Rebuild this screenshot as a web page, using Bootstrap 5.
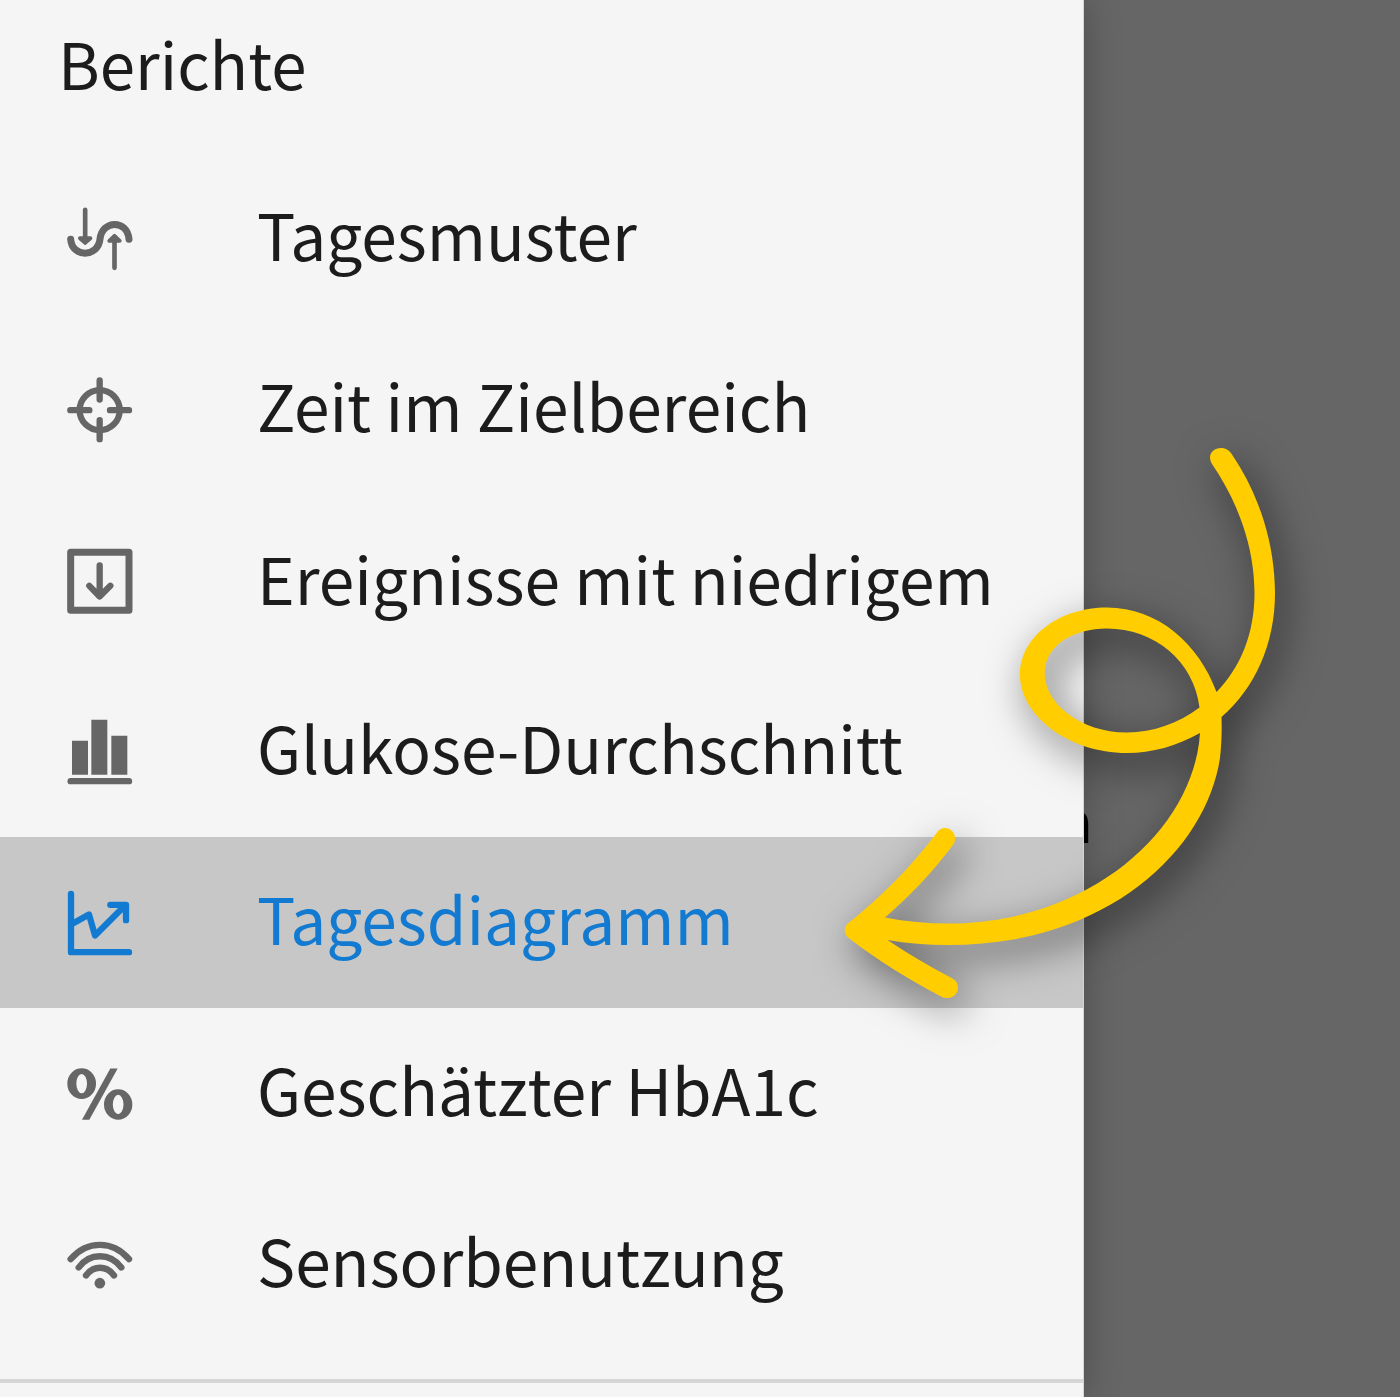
<!DOCTYPE html>
<html lang="de">
<head>
<meta charset="utf-8">
<meta name="viewport" content="width=device-width, initial-scale=1">
<title>Berichte</title>
<link rel="stylesheet" href="https://cdn.jsdelivr.net/npm/bootstrap@5.3.0/dist/css/bootstrap.min.css">
<style>
body{font-family:"Noto Sans CJK SC","Noto Sans CJK JP","Noto Sans",sans-serif;background:#666;color:#1c1c1c}
.app-shell{height:1397px;width:1400px}
.drawer{width:1084px;background:#f5f5f5;z-index:2;border-right:1px solid #d5d5d5;box-shadow:0 0 34px rgba(0,0,0,.26)}
.drawer-title{font-size:63.6px;line-height:125px;height:153px;padding-left:58px;font-weight:400}
.report-item{height:171px;padding:0 0 0 50px;font-size:64px;line-height:92px;color:#1c1c1c;text-decoration:none;white-space:nowrap}
.report-item span{padding-bottom:12px}
.report-item.low-events span{padding-bottom:7px}
.report-item.selected{background:#c7c7c7;color:#127bd1}
.report-icon{width:100px;height:100px;margin-right:107px;fill:none;stroke:#666;stroke-width:19;stroke-linecap:round;stroke-linejoin:round}
.selected .report-icon{stroke:#127bd1}
.report-icon .solid{fill:#666;stroke:none}
.drawer-rule{height:4px;background:#d6d6d6;margin-top:29px}
.covered-text{right:307px;top:777px;font-size:56px;line-height:84px;color:#000}
.pointer-arrow{z-index:3;filter:drop-shadow(8px 13px 20px rgba(0,0,0,.52))}
</style>
</head>
<body>
<div class="app-shell position-relative overflow-hidden d-flex">
  <span class="covered-text position-absolute">n</span>
  <aside class="drawer position-relative h-100 d-flex flex-column">
    <h1 class="drawer-title m-0">Berichte</h1>
    <nav class="d-flex flex-column">
      <a class="report-item d-flex align-items-center" href="#">
        <svg class="report-icon" viewBox="0 -4.5 300 300"><path d="M62 146C66 202 144 202 150 146C156 88 232 86 237 146" stroke-width="21"/><path d="M105.500 58V145M193.500 232V150" stroke-width="14"/><path d="M90 143H121L105.500 157ZM178 151H209L193.500 136Z" fill="#666" stroke-width="12"/></svg>
        <span>Tagesmuster</span></a>
      <a class="report-item d-flex align-items-center" href="#">
        <svg class="report-icon" viewBox="0 -1.5 300 300"><circle cx="149" cy="149" r="60"/><path d="M149 60V117M149 179V236M61 149H118M180 149H237"/></svg>
        <span>Zeit im Zielbereich</span></a>
      <a class="report-item low-events d-flex align-items-center" href="#">
        <svg class="report-icon" viewBox="0 1.500 300 300"><path d="M62 65H237V239H62Z" stroke-width="21"/><path d="M149 105V196M118 166L149 198L181 166"/></svg>
        <span>Ereignisse mit niedrigem</span></a>
      <a class="report-item d-flex align-items-center" href="#">
        <svg class="report-icon" viewBox="0 4.500 300 300"><path class="solid" d="M66 121H114V223H66ZM124 58H172V223H124ZM184 106H232V223H184Z"/><path d="M62 242H237"/></svg>
        <span>Glukose-Durchschnitt</span></a>
      <a class="report-item selected d-flex align-items-center" href="#" aria-current="page">
        <svg class="report-icon" viewBox="0 7.500 300 300"><path d="M63 70V245H237M63 162L117 132L135 195L225 105M181 103H228V149"/></svg>
        <span>Tagesdiagramm</span></a>
      <a class="report-item d-flex align-items-center" href="#">
        <svg class="report-icon" viewBox="0 -19.500 300 300"><path class="solid" fill-rule="evenodd" d="M52 99.500a43 46 0 1 0 86 0a43 46 0 1 0 -86 0ZM79 99.500a16 29 0 1 0 32 0a16 29 0 1 0 -32 0ZM162 162a42.500 46 0 1 0 85 0a42.500 46 0 1 0 -85 0ZM188.500 162a16 29 0 1 0 32 0a16 29 0 1 0 -32 0Z"/><path class="solid" d="M181 54H203L118 208H96Z"/></svg>
        <span>Geschätzter HbA1c</span></a>
      <a class="report-item d-flex align-items-center" href="#">
        <svg class="report-icon" viewBox="0 -16.500 300 300"><path d="M62 116C111 59 188 59 237 116M86 141C119 96 180 96 214 141M108 165C131 134 169 134 192 165"/><circle class="solid" cx="149.500" cy="188" r="16"/></svg>
        <span>Sensorbenutzung</span></a>
    </nav>
    <div class="drawer-rule"></div>
  </aside>
  <svg class="pointer-arrow position-absolute top-0 start-0" width="1400" height="1397" viewBox="0 0 1400 1397" aria-hidden="true">
    <path fill="#ffcd00" fill-rule="evenodd" d="M1210 457.500C1210 452 1215 448 1221 448C1226 448 1229.500 450.500 1232 454.500C1260 496 1275 545 1275 593C1275 644 1255 688 1221.500 717C1222 731 1221.500 745 1220 758C1206 850 1108 945 948 945C927 945 907 943.500 887.500 940C908 954 930 966.500 952.500 978.500C956 980.500 958 983.500 958 987.500C958 993.500 953.500 998 947.500 998C945 998 943 997.500 941 996.500C910 980.500 879 961 850 939C846.500 936.500 844.700 934 844.700 930.500C844.700 927.500 846 925 848.500 923C881 897 911 867 937 832.500C939 829.500 941.500 828 945 828C950.500 828 955 832.500 955 838.500C955 841 954.500 843 953 845C933 871.500 910 896 885 917.500C906 921.500 927 923.500 948 923.500C1089 923.500 1194 830 1200 733C1177 746 1152 753 1127 753C1068 753 1020 715 1020 675C1020 636 1060 607.500 1107 607.500C1158 607.500 1199 644 1216.500 692C1241 667 1254.500 633 1254.500 593C1254.500 547 1238 502 1212 464Q1210 461 1210 457.500ZM1199.500 707.500C1194 661 1154 628.500 1107 628.500C1074 628.500 1044.700 645 1044.700 673.500C1044.700 703 1080 732.500 1127 732.500C1153 732.500 1179 723 1199.500 707.500Z"/>
  </svg>
</div>
<script src="https://cdn.jsdelivr.net/npm/bootstrap@5.3.0/dist/js/bootstrap.bundle.min.js"></script>
</body>
</html>
